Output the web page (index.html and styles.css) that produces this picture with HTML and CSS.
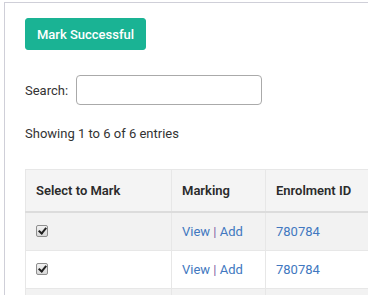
FILE: index.html
```html
<!DOCTYPE html>
<html>
<head>
<meta charset="utf-8">
<link rel="stylesheet" href="styles.css">
</head>
<body>
<div class="panel">
  <button class="btn-success">Mark Successful</button>
  <div class="search">
    <label>Search:</label>
    <input type="text" class="search-input">
  </div>
  <div class="info">Showing 1 to 6 of 6 entries</div>
  <table class="grid">
    <thead>
      <tr>
        <th class="c1">Select to Mark</th>
        <th class="c2">Marking</th>
        <th class="c3">Enrolment ID</th>
      </tr>
    </thead>
    <tbody>
      <tr class="odd">
        <td><input type="checkbox" class="chk" checked></td>
        <td><a>View</a> <span class="sep">|</span> <a>Add</a></td>
        <td><a>780784</a></td>
      </tr>
      <tr>
        <td><input type="checkbox" class="chk" checked></td>
        <td><a>View</a> <span class="sep">|</span> <a>Add</a></td>
        <td><a>780784</a></td>
      </tr>
      <tr class="odd">
        <td><input type="checkbox" class="chk" checked></td>
        <td><a>View</a> <span class="sep">|</span> <a>Add</a></td>
        <td><a>780784</a></td>
      </tr>
    </tbody>
  </table>
</div>
</body>
</html>
```
FILE: styles.css
```css
html, body {
  margin: 0;
  padding: 0;
  background: #fff;
  overflow: hidden;
}
body {
  font-family: Roboto, "Liberation Sans", sans-serif;
  font-size: 13px;
  color: #333;
}
.panel {
  margin: 2px 0 0 4px;
  border-top: 1px solid #cfcfd8;
  border-left: 1px solid #cfcfd8;
  padding: 15px 0 0 20px;
  width: 600px;
  height: 400px;
}
.btn-success {
  display: block;
  background: #1ab394;
  border: 1px solid #1ab394;
  color: #fff;
  font-family: Roboto, "Liberation Sans", sans-serif;
  font-size: 13px;
  font-weight: 500;
  height: 32px;
  width: 121px;
  padding: 0;
  border-radius: 3px;
}
.search {
  display: flex;
  align-items: center;
  gap: 8px;
  margin-top: 25px;
  height: 30px;
}
.search label {
  font-size: 13px;
}
.search-input {
  width: 186px;
  height: 30px;
  box-sizing: border-box;
  border: 1px solid #aaa;
  border-radius: 4px;
  margin: 0;
}
.info {
  margin-top: 19px;
  line-height: 20px;
  font-size: 13px;
}
.grid {
  margin-top: 25px;
  border-collapse: collapse;
  border: 1px solid #e7e7e7;
}
.grid th {
  background: #f4f4f4;
  text-align: left;
  font-weight: 600;
  color: #2b2b2b;
  padding: 10px 10px;
  line-height: 21px;
  border: 1px solid #e7e7e7;
  border-bottom: 2px solid #dcdcdc;
}
.grid td {
  padding: 8px 10px;
  line-height: 21px;
  border: 1px solid #e7e7e7;
  vertical-align: top;
}
.c1 { width: 125px; }
.c2 { width: 73px; }
.c3 { width: 200px; }
.grid tr.odd td {
  background: #f2f2f2;
}
.grid a {
  color: #4178c0;
}
.sep {
  color: #8062a6;
}
.chk {
  appearance: none;
  -webkit-appearance: none;
  display: inline-block;
  position: relative;
  margin: 4px 0 0 0;
  width: 12px;
  height: 12px;
  box-sizing: border-box;
  border: 1px solid #8e8e8e;
  border-radius: 2px;
  background: linear-gradient(#f2f2f2, #d8d8d8);
  vertical-align: top;
}
.chk::after {
  content: "";
  position: absolute;
  left: 3px;
  top: 0px;
  width: 3px;
  height: 6px;
  border: solid #222;
  border-width: 0 2px 2px 0;
  transform: rotate(40deg);
}
```
